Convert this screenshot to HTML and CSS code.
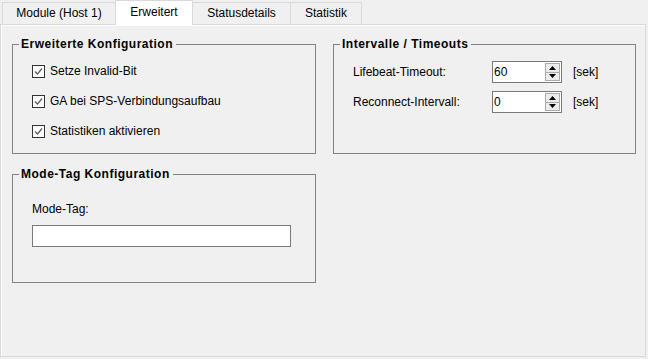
FILE: index.html
```html
<!DOCTYPE html>
<html lang="de">
<head>
  <meta charset="UTF-8" />
  <title>Erweitert</title>
  <link rel="stylesheet" href="styles.css">
</head>
<body>
  <div class="tabs">
    <div class="tab tab-module">Module (Host 1)</div>
    <div class="tab tab-erweitert active">Erweitert</div>
    <div class="tab tab-status">Statusdetails</div>
    <div class="tab tab-statistik">Statistik</div>
  </div>

  <div class="panel">
    <div class="col">
      <fieldset class="group group-config">
        <legend>Erweiterte Konfiguration</legend>
        <label class="check"><span class="box"><svg width="11" height="11" viewBox="0 0 11 11"><path d="M2 5.5 L4.5 8 L9 2.5" fill="none" stroke="#5a5a5a" stroke-width="1.2"/></svg></span>Setze Invalid-Bit</label>
        <label class="check"><span class="box"><svg width="11" height="11" viewBox="0 0 11 11"><path d="M2 5.5 L4.5 8 L9 2.5" fill="none" stroke="#5a5a5a" stroke-width="1.2"/></svg></span>GA bei SPS-Verbindungsaufbau</label>
        <label class="check"><span class="box"><svg width="11" height="11" viewBox="0 0 11 11"><path d="M2 5.5 L4.5 8 L9 2.5" fill="none" stroke="#5a5a5a" stroke-width="1.2"/></svg></span>Statistiken aktivieren</label>
      </fieldset>

      <fieldset class="group group-mode">
        <legend>Mode-Tag Konfiguration</legend>
        <div class="field-label">Mode-Tag:</div>
        <div class="textbox"></div>
      </fieldset>
    </div>

    <div class="col">
      <fieldset class="group group-timeouts">
        <legend>Intervalle / Timeouts</legend>
        <div class="row">
          <span class="row-label">Lifebeat-Timeout:</span>
          <div class="spin">
            <span class="spin-value">60</span>
            <div class="spin-buttons">
              <span class="spin-btn"><svg width="7" height="4" viewBox="0 0 7 4"><path d="M3.5 0 L7 4 L0 4 Z" fill="#000"/></svg></span>
              <span class="spin-btn"><svg width="7" height="4" viewBox="0 0 7 4"><path d="M0 0 L7 0 L3.5 4 Z" fill="#000"/></svg></span>
            </div>
          </div>
          <span class="unit">[sek]</span>
        </div>
        <div class="row">
          <span class="row-label">Reconnect-Intervall:</span>
          <div class="spin">
            <span class="spin-value">0</span>
            <div class="spin-buttons">
              <span class="spin-btn"><svg width="7" height="4" viewBox="0 0 7 4"><path d="M3.5 0 L7 4 L0 4 Z" fill="#000"/></svg></span>
              <span class="spin-btn"><svg width="7" height="4" viewBox="0 0 7 4"><path d="M0 0 L7 0 L3.5 4 Z" fill="#000"/></svg></span>
            </div>
          </div>
          <span class="unit">[sek]</span>
        </div>
      </fieldset>
    </div>
  </div>
</body>
</html>
```

FILE: styles.css
```css
* { box-sizing: border-box; }
html, body { height: 100%; }
body {
  margin: 0;
  background: #f0f0f0;
  font-family: "Liberation Sans", Arial, sans-serif;
  font-size: 12px;
  color: #000;
  display: flex; flex-direction: column;
}

.tabs {
  display: flex; align-items: flex-end;
  height: 24px; padding-left: 2px;
  position: relative; z-index: 1;
}
.tab {
  height: 22px; line-height: 20px; text-align: center;
  background: #f0f0f0; border: 1px solid #d9d9d9; border-bottom: none;
  margin-left: -1px;
}
.tab:first-child { margin-left: 0; }
.tab-module { width: 114px; }
.tab-erweitert { width: 78px; }
.tab-status { width: 99px; }
.tab-statistik { width: 72px; }
.tab.active {
  height: 25px; line-height: 22px; margin-bottom: -1px;
  background: #fff; position: relative; z-index: 2;
}

.panel {
  flex: 1;
  margin: 0 2px 2px 0;
  border: 1px solid #d9d9d9;
  box-shadow: inset 1px 1px 0 #fff;
  background: #f0f0f0;
  padding: 12px 9px 12px 11px;
  display: flex; gap: 17px;
}
.col { width: 304px; flex-shrink: 0; display: flex; flex-direction: column; gap: 13px; }
.col + .col { width: 303px; }

.group {
  margin: 0; border: 1px solid #828282;
  padding: 0 0 0 19px;
}
.group legend {
  font-weight: bold; padding: 0 3px 0 2px; margin-left: -13px;
  line-height: 14px; letter-spacing: 0.5px;
}
.group-config { height: 117px; padding-top: 5px; }
.group-timeouts { height: 117px; padding-top: 6px; }
.group-mode { height: 116px; padding-top: 21px; }

.check { display: flex; align-items: center; height: 30px; gap: 5px; }
.box {
  width: 13px; height: 13px; border: 1px solid #333; background: #fff;
  display: flex; align-items: center; justify-content: center;
}

.field-label { line-height: 14px; }
.textbox {
  width: 259px; height: 22px; margin-top: 9px;
  background: #fff; border: 1px solid #7a7a7a;
}

.row { display: flex; align-items: center; height: 30px; }
.row-label { width: 139px; }
.spin {
  width: 70px; height: 22px; display: flex;
  background: #fff; border: 1px solid #7a7a7a;
}
.spin-value { flex: 1; line-height: 20px; padding-left: 1px; }
.spin-buttons {
  width: 16px; padding: 1px 1px 1px 0;
  display: flex; flex-direction: column;
}
.spin-btn {
  flex: 1; display: flex; align-items: center; justify-content: center;
  background: #ececec; border: 1px solid #acacac;
}
.spin-btn + .spin-btn { border-top: none; }
.unit { margin-left: 11px; }
```
